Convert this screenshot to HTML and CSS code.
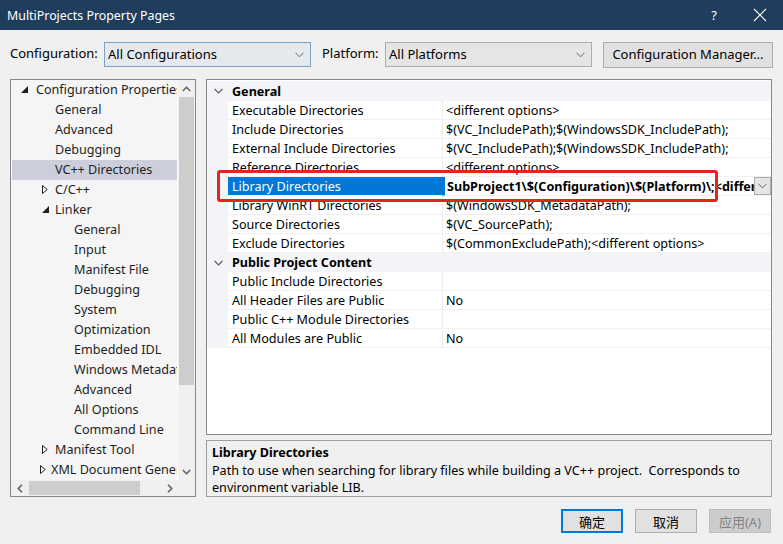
FILE: index.html
```html
<!DOCTYPE html>
<html>
<head>
<meta charset="utf-8">
<link rel="stylesheet" href="styles.css">
</head>
<body>
<div class="window">
  <div class="titlebar">
    <span class="title">MultiProjects Property Pages</span>
    <span class="tb-help">?</span>
    <span class="tb-close"><svg width="14" height="14" viewBox="0 0 14 14"><path d="M1 1L13 13M13 1L1 13" stroke="#fff" stroke-width="1.1" fill="none"/></svg></span>
  </div>

  <div class="configbar">
    <span class="lbl lbl-config">Configuration:</span>
    <div class="combo combo-focus"><span>All Configurations</span><svg class="chev" width="9" height="6" viewBox="0 0 9 6"><path d="M0.5 0.8L4.5 4.8L8.5 0.8" stroke="#666" stroke-width="1" fill="none"/></svg></div>
    <span class="lbl lbl-platform">Platform:</span>
    <div class="combo"><span>All Platforms</span><svg class="chev" width="9" height="6" viewBox="0 0 9 6"><path d="M0.5 0.8L4.5 4.8L8.5 0.8" stroke="#666" stroke-width="1" fill="none"/></svg></div>
    <button class="btn btn-cm">Configuration Manager...</button>
  </div>

  <div class="main">
    <div class="tree">
      <div class="tree-body">
        <div class="tree-list">
          <div class="trow l0"><span class="arr"><svg width="7" height="7" viewBox="0 0 7 7"><path d="M7 0V7H0Z" fill="#1e1e1e"/></svg></span><span class="ttext">Configuration Properties</span></div>
          <div class="trow l1"><span class="ttext">General</span></div>
          <div class="trow l1"><span class="ttext">Advanced</span></div>
          <div class="trow l1"><span class="ttext">Debugging</span></div>
          <div class="trow l1 tsel"><span class="ttext">VC++ Directories</span></div>
          <div class="trow l1x"><span class="arr"><svg width="6" height="9" viewBox="0 0 6 9"><path d="M0.5 0.5L5.2 4.5L0.5 8.5Z" stroke="#1e1e1e" stroke-width="1" fill="none"/></svg></span><span class="ttext">C/C++</span></div>
          <div class="trow l1x"><span class="arr"><svg width="7" height="7" viewBox="0 0 7 7"><path d="M7 0V7H0Z" fill="#1e1e1e"/></svg></span><span class="ttext">Linker</span></div>
          <div class="trow l2"><span class="ttext">General</span></div>
          <div class="trow l2"><span class="ttext">Input</span></div>
          <div class="trow l2"><span class="ttext">Manifest File</span></div>
          <div class="trow l2"><span class="ttext">Debugging</span></div>
          <div class="trow l2"><span class="ttext">System</span></div>
          <div class="trow l2"><span class="ttext">Optimization</span></div>
          <div class="trow l2"><span class="ttext">Embedded IDL</span></div>
          <div class="trow l2"><span class="ttext">Windows Metadata</span></div>
          <div class="trow l2"><span class="ttext">Advanced</span></div>
          <div class="trow l2"><span class="ttext">All Options</span></div>
          <div class="trow l2"><span class="ttext">Command Line</span></div>
          <div class="trow l1x"><span class="arr"><svg width="6" height="9" viewBox="0 0 6 9"><path d="M0.5 0.5L5.2 4.5L0.5 8.5Z" stroke="#1e1e1e" stroke-width="1" fill="none"/></svg></span><span class="ttext">Manifest Tool</span></div>
          <div class="trow l1x"><span class="arr"><svg width="6" height="9" viewBox="0 0 6 9"><path d="M0.5 0.5L5.2 4.5L0.5 8.5Z" stroke="#1e1e1e" stroke-width="1" fill="none"/></svg></span><span class="ttext">XML Document Generator</span></div>
        </div>
        <div class="vscroll">
          <div class="sb-btn"><svg width="9" height="6" viewBox="0 0 9 6"><path d="M0.8 5L4.5 1.3L8.2 5" stroke="#606060" stroke-width="1.6" fill="none"/></svg></div>
          <div class="vtrack"><div class="vthumb"></div></div>
          <div class="sb-btn"><svg width="9" height="6" viewBox="0 0 9 6"><path d="M0.8 1L4.5 4.7L8.2 1" stroke="#606060" stroke-width="1.6" fill="none"/></svg></div>
        </div>
      </div>
      <div class="hscroll-row">
        <div class="hscroll">
          <div class="sb-btn"><svg width="6" height="9" viewBox="0 0 6 9"><path d="M5 0.8L1.3 4.5L5 8.2" stroke="#606060" stroke-width="1.6" fill="none"/></svg></div>
          <div class="htrack"><div class="hthumb"></div></div>
          <div class="sb-btn"><svg width="6" height="9" viewBox="0 0 6 9"><path d="M1 0.8L4.7 4.5L1 8.2" stroke="#606060" stroke-width="1.6" fill="none"/></svg></div>
        </div>
        <div class="corner"></div>
      </div>
    </div>

    <div class="right">
      <div class="grid">
        <div class="grow gcat gcat-first">
          <span class="gutter"><svg width="9" height="6" viewBox="0 0 9 6"><path d="M0.5 0.8L4.5 4.8L8.5 0.8" stroke="#555" stroke-width="1.2" fill="none"/></svg></span>
          <span class="gcat-name">General</span>
        </div>
        <div class="grow"><span class="gutter"></span><span class="gname">Executable Directories</span><span class="gval">&lt;different options&gt;</span></div>
        <div class="grow"><span class="gutter"></span><span class="gname">Include Directories</span><span class="gval">$(VC_IncludePath);$(WindowsSDK_IncludePath);</span></div>
        <div class="grow"><span class="gutter"></span><span class="gname">External Include Directories</span><span class="gval">$(VC_IncludePath);$(WindowsSDK_IncludePath);</span></div>
        <div class="grow"><span class="gutter"></span><span class="gname">Reference Directories</span><span class="gval">&lt;different options&gt;</span></div>
        <div class="grow gsel"><span class="gutter"></span><span class="gname">Library Directories</span><span class="gval gedit"><span class="edit-text">SubProject1\$(Configuration)\$(Platform)\;&lt;different options&gt;</span><span class="dd"><svg width="9" height="6" viewBox="0 0 9 6"><path d="M0.5 0.8L4.5 4.8L8.5 0.8" stroke="#666" stroke-width="1" fill="none"/></svg></span></span></div>
        <div class="grow"><span class="gutter"></span><span class="gname">Library WinRT Directories</span><span class="gval">$(WindowsSDK_MetadataPath);</span></div>
        <div class="grow"><span class="gutter"></span><span class="gname">Source Directories</span><span class="gval">$(VC_SourcePath);</span></div>
        <div class="grow"><span class="gutter"></span><span class="gname">Exclude Directories</span><span class="gval">$(CommonExcludePath);&lt;different options&gt;</span></div>
        <div class="grow gcat">
          <span class="gutter"><svg width="9" height="6" viewBox="0 0 9 6"><path d="M0.5 0.8L4.5 4.8L8.5 0.8" stroke="#555" stroke-width="1.2" fill="none"/></svg></span>
          <span class="gcat-name">Public Project Content</span>
        </div>
        <div class="grow"><span class="gutter"></span><span class="gname">Public Include Directories</span><span class="gval"></span></div>
        <div class="grow"><span class="gutter"></span><span class="gname">All Header Files are Public</span><span class="gval">No</span></div>
        <div class="grow"><span class="gutter"></span><span class="gname">Public C++ Module Directories</span><span class="gval"></span></div>
        <div class="grow"><span class="gutter"></span><span class="gname">All Modules are Public</span><span class="gval">No</span></div>
        <div class="annot"></div>
      </div>
      <div class="desc">
        <div class="desc-title">Library Directories</div>
        <div class="desc-text">Path to use when searching for library files while building a VC++ project.&nbsp; Corresponds to environment variable LIB.</div>
      </div>
    </div>
  </div>

  <div class="footer">
    <button class="btn btn-dlg btn-default">确定</button>
    <button class="btn btn-dlg">取消</button>
    <button class="btn btn-dlg btn-disabled">应用(A)</button>
  </div>
</div>
</body>
</html>
```

FILE: styles.css
```css
* { box-sizing: border-box; }
html, body { margin: 0; padding: 0; }
body {
  width: 783px;
  height: 544px;
  overflow: hidden;
  background: #f0f0f0;
  font-family: "Noto Sans", "Noto Sans CJK SC", sans-serif;
  font-size: 12px;
  color: #000;
}
.window { width: 783px; height: 544px; display: flex; flex-direction: column; }

/* title bar */
.titlebar {
  height: 30px;
  background: #1f3d5c;
  color: #fff;
  display: flex;
  align-items: center;
  padding-left: 7px;
  font-size: 12.4px;
}
.title { flex: 1; }
.tb-help { width: 46px; text-align: center; font-size: 13px; }
.tb-close { width: 46px; display: flex; justify-content: center; align-items: center; }

/* config bar */
.configbar {
  display: flex;
  align-items: center;
  height: 25px;
  margin-top: 12px;
  padding-left: 10px;
  font-size: 13px;
}
.lbl { padding-bottom: 3px; }
.lbl-config { width: 94px; }
.lbl-platform { width: 63px; margin-left: 11px; }
.combo {
  width: 207px;
  height: 25px;
  border: 1px solid #adadad;
  background: #e5e5e5;
  display: flex;
  align-items: center;
  padding-left: 3px;
  padding-right: 6px;
}
.combo span { flex: 1; padding-bottom: 2px; }
.combo-focus { border-color: #7a9fc9; background: #e5e9ee; }
.btn {
  font-family: "Noto Sans", "Noto Sans CJK SC", sans-serif;
  font-size: 13px;
  color: #000;
  background: #e1e1e1;
  border: 1px solid #adadad;
  padding: 0;
  margin: 0;
}
.btn-cm { width: 170px; height: 26px; margin-left: 11px; padding-bottom: 2px; }

/* main area */
.main {
  display: flex;
  margin-top: 12px;
  padding-left: 10px;
  height: 418px;
}

/* tree */
.tree {
  width: 186px;
  height: 418px;
  border: 1px solid #828790;
  background: #f5f5f5;
  display: flex;
  flex-direction: column;
}
.tree-body { display: flex; height: 400px; }
.tree-list {
  width: 167px;
  border-right: 1px solid #ffffff;
  overflow: hidden;
  padding-left: 1px;
}
.trow {
  height: 20px;
  display: flex;
  align-items: center;
  white-space: nowrap;
  font-size: 12.6px;
  color: #1e1e1e;
  padding-bottom: 2px;
}
.trow .arr { display: flex; align-items: center; justify-content: center; width: 10px; padding-top: 1px; }
.l0 { padding-left: 9px; }
.l0 .arr { margin-right: 6px; }
.l0 .ttext { margin-left: 2px; }
.l1 { padding-left: 43px; }
.l1x { padding-left: 28px; }
.l1x .arr { margin-right: 5px; }
.l2 { padding-left: 62px; }
.tsel { background: #cccedb; }

.vscroll {
  width: 17px;
  display: flex;
  flex-direction: column;
  background: #f0f0f0;
}
.sb-btn {
  width: 17px;
  height: 17px;
  display: flex;
  align-items: center;
  justify-content: center;
  flex: none;
}
.vtrack { flex: 1; padding: 0 1px; }
.vthumb { height: 288px; background: #cdcdcd; }

.hscroll-row { display: flex; height: 16px; }
.hscroll {
  width: 167px;
  display: flex;
  background: #f0f0f0;
}
.hscroll .sb-btn { height: 16px; }
.htrack { flex: 1; padding: 1px 0; }
.hthumb { width: 111px; height: 100%; margin-left: 1px; background: #cdcdcd; }
.corner { flex: 1; background: #f0f0f0; }

/* right column */
.right {
  margin-left: 10px;
  width: 566px;
  display: flex;
  flex-direction: column;
}
.grid {
  position: relative;
  height: 358px;
  border: 1px solid #828790;
  background: #fff;
  padding-top: 1px;
}
.grow {
  display: flex;
  height: 19px;
  white-space: nowrap;
  font-size: 12.6px;
}
.gcat-first { height: 20px; }
.gutter {
  width: 21px;
  flex: none;
  background: #f3f4f7;
  display: flex;
  align-items: center;
  justify-content: center;
  padding-left: 1px;
}
.gname {
  width: 215px;
  flex: none;
  border-right: 1px solid #ececec;
  border-bottom: 1px solid #f0f0f0;
  padding-left: 4px;
  display: flex;
  align-items: center;
  overflow: hidden;
}
.gval {
  flex: 1;
  border-bottom: 1px solid #f0f0f0;
  padding-left: 3px;
  display: flex;
  align-items: center;
  overflow: hidden;
  min-width: 0;
}
.gcat { background: #f3f4f7; }
.gcat-name { font-weight: bold; padding-left: 4px; display: flex; align-items: center; }

.gsel .gname { background: #0078d7; color: #fff; border-right-color: #0078d7; }
.gedit { padding-left: 2px; padding-right: 0; border-left: 2px solid #0078d7; }
.edit-text { font-weight: bold; flex: 1; overflow: hidden; min-width: 0; }
.dd {
  width: 17px;
  height: 18px;
  flex: none;
  background: #e5e5e5;
  border: 1px solid #acacac;
  display: flex;
  align-items: center;
  justify-content: center;
}

.annot {
  position: absolute;
  left: 10px;
  top: 90px;
  width: 501px;
  height: 32px;
  border: 3px solid #e8231b;
  border-radius: 3px;
  pointer-events: none;
}

/* description */
.desc {
  margin-top: 5px;
  height: 57px;
  border: 1px solid #a0a0a0;
  background: #f0f0f0;
  padding: 3px 5px 0 5px;
  font-size: 12.6px;
  line-height: 17.5px;
}
.desc-title { font-weight: bold; }

/* footer */
.footer {
  display: flex;
  justify-content: flex-end;
  gap: 12px;
  padding-right: 12px;
  margin-top: 12px;
}
.btn-dlg { width: 62px; height: 24px; font-size: 13px; }
.btn-default { border: 2px solid #0078d7; }
.btn-disabled { background: #cccccc; border-color: #bfbfbf; color: #838383; }
```
